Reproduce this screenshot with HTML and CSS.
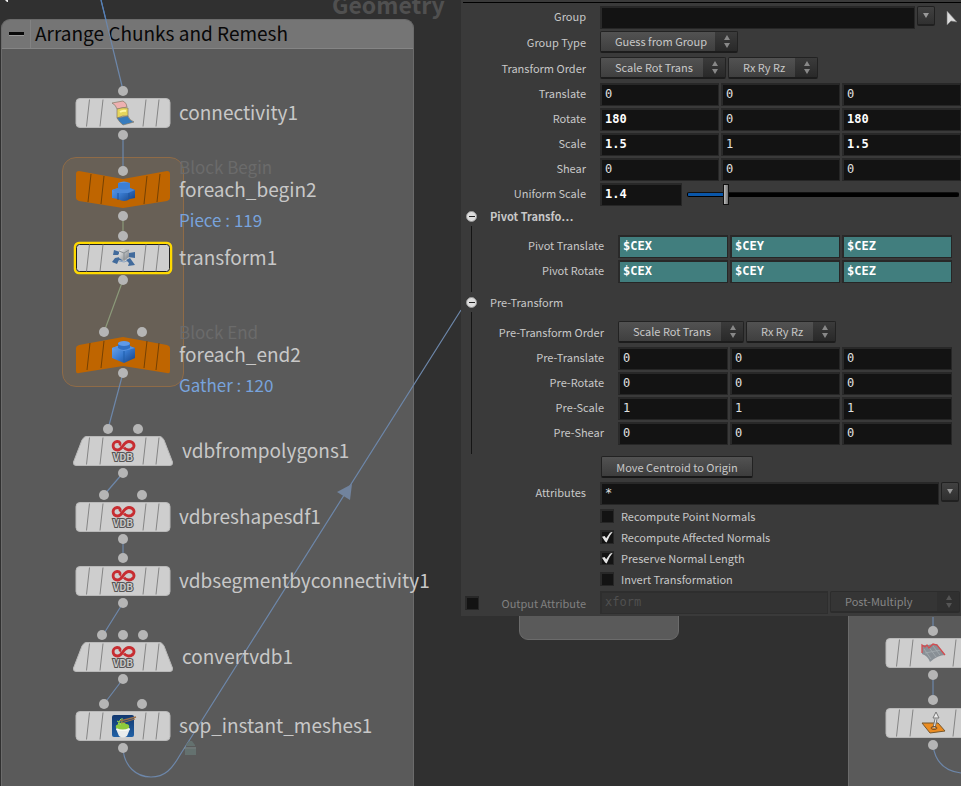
FILE: index.html
```html
<!DOCTYPE html>
<html lang="en">
<head>
<meta charset="utf-8">
<title>Network editor</title>
<link rel="stylesheet" href="styles.css">
</head>
<body>
<svg class="defs" aria-hidden="true">
  <defs>
    <linearGradient id="blue" x1="0" y1="0" x2="1" y2="1"><stop offset="0" stop-color="#71a9ef"/><stop offset=".5" stop-color="#397bd0"/><stop offset="1" stop-color="#123f83"/></linearGradient>
    <linearGradient id="sky" x1="0" y1="0" x2="0" y2="1"><stop offset="0" stop-color="#12386f"/><stop offset="1" stop-color="#2161a6"/></linearGradient>
    <linearGradient id="metal" x1="0" y1="0" x2="1" y2="1"><stop offset="0" stop-color="#f4f4f4"/><stop offset="1" stop-color="#777d82"/></linearGradient>
    <g id="ticks" fill="none" stroke="#858585"><path d="M-33.500-13.500L-36.500 13.500M-20-13.500L-23 13.500M23-13.500L20 13.500M36-13.500L33 13.500"/></g>
    <g id="plate"><rect x="-47" y="-14.500" width="94" height="29" rx="4" fill="#cecece" stroke="#b9b9b9"/><use href="#ticks"/></g>
    <g id="trapezoid"><path d="M-37-14.500H37Q39-14.500 41-11L49.500 11Q50 14.500 47 14.500H-47Q-50 14.500-49.500 11L-41-11Q-39-14.500-37-14.500Z" fill="#cecece" stroke="#b9b9b9"/><use href="#ticks"/></g>
    <g id="vdb">
      <path d="M9-1.500C13-5 10.500-9.500 6-9.500C0-9.500 0-1-5.500-1C-11-1-11.500-9-6-9.500C-3-9.700-2-7-3.500-5.500M1-3.500C3-.5 7.500 0 10-3" fill="none" stroke="#c72d31" stroke-width="2.800"/>
      <text x="0" y="10" class="vdb-text">VDB</text>
    </g>
    <g id="brick"><path d="M-11-4L0-8L12-4V6L1 11L-11 6Z" fill="url(#blue)"/><path d="M-11-4L1-1L12-4L1-8Z" fill="#5792df"/><path d="M1-1V10" stroke="#1f5eab"/><path d="M-5-9V-4Q0 0 7-4V-9Z" fill="#306fc3"/><ellipse cx="1" cy="-8.500" rx="6" ry="2.500" fill="#5f9ae8"/></g>
    <g id="brick-top"><path d="M-11-2L-5-4V-9Q1-12 7-9V-4L12-2V6L7 7Q1 11-5 7L-11 6Z" fill="url(#blue)"/><path d="M-11-2L-5-4L7-4L12-2L5 1L-5 1Z" fill="#4786d8"/><path d="M-5 1V8M6 1V7" stroke="#1b529c"/><path d="M-5-9V-4Q1-1 7-4V-9Z" fill="#3c7fd6"/></g>
  </defs>
</svg>

<main class="canvas">
  <div class="context">Geometry</div>
  <section class="netbox netbox--main">
    <header class="netbox__head"><button class="netbox__fold" aria-label="Collapse"></button><h2>Arrange Chunks and Remesh</h2></header>
  </section>
  <div class="netbox netbox--small"></div>
  <div class="netbox netbox--right"></div>
  <div class="loop"></div>

  <svg class="wires" width="961" height="786" aria-hidden="true">
    <path d="M5 0H8V2H7Z" fill="#eee"/>
    <g fill="none" stroke="#6d87aa" stroke-width="1.200">
      <path d="M101 0L123 90" /><path d="M123 135V171M123 373L108 429M123 473L104 495M123 539V558M123 603L103 635M123 679L104 704"/>
      <path d="M123 748C124 766 136 777 151 777C165 777 172 769 180 755L461 310M933 617V631M933 675V700M933 745Q936 770 961 773"/>
      <path d="M123 216V236M123 280L104 332" stroke="#8b9979"/>
    </g>
    <path d="M101 0L106 20" stroke="#4e7fbd"/>
    <path d="M352 484L337 492L350 500Z" fill="#71839d"/>
    <g fill="#64716f"><path d="M186 745l3-4h3l3 4v1h-9zM185 749h11v6h-11z"/><path d="M184 748h12" stroke="#829392"/></g>
    <g class="dots">
      <circle cx="123" cy="91" r="5"/><circle cx="123" cy="135" r="5"/><circle cx="123" cy="171" r="5"/><circle cx="123" cy="216" r="5"/><circle cx="123" cy="236" r="5"/><circle cx="123" cy="280" r="5"/><circle cx="104" cy="332" r="5"/><circle cx="142" cy="332" r="5"/><circle cx="123" cy="373" r="5"/>
      <circle cx="108" cy="429" r="5"/><circle cx="138" cy="429" r="5"/><circle cx="123" cy="473" r="5"/><circle cx="104" cy="495" r="5"/><circle cx="142" cy="495" r="5"/><circle cx="123" cy="539" r="5"/><circle cx="123" cy="558" r="5"/><circle cx="123" cy="603" r="5"/>
      <circle cx="102" cy="635" r="5"/><circle cx="123" cy="635" r="5"/><circle cx="143" cy="635" r="5"/><circle cx="123" cy="679" r="5"/><circle cx="104" cy="704" r="5"/><circle cx="142" cy="704" r="5"/><circle cx="123" cy="748" r="5"/>
      <circle cx="933" cy="631" r="5"/><circle cx="933" cy="675" r="5"/><circle cx="933" cy="700" r="5"/><circle cx="933" cy="745" r="5"/>
    </g>
  </svg>

  <div class="node node--connectivity">
    <svg viewBox="-50 -20 100 40"><use href="#plate"/>
      <g stroke="#857a66" stroke-width=".7"><path d="M-11-10L0-12Q4-10 4-6L-6-4Q-7-8-11-10Z" fill="#eeb0b0"/><path d="M-6-4Q0-6 5-5V3Q0 2-6 5Z" fill="#e5d55c"/><path d="M-6 5L5 3Q6 7 11 9L0 12Q-3 10-6 5Z" fill="#367bbd"/></g><path d="M-3-1Q0-3 3-2" stroke="#fff6a0" fill="none" stroke-width="2"/>
    </svg>
    <span class="node__name">connectivity1</span>
  </div>
  <div class="node node--begin">
    <svg viewBox="-50 -20 100 40"><path d="M-44-19L0-11L44-19Q47-19 47-16V8Q47 10 44 11L0 18L-44 11Q-47 10-47 8V-16Q-47-19-44-19Z" fill="#bf6500"/><path d="M-32-16L-35 12M-19-14L-22 14M24-14L21 14M37-16L34 12" stroke="#754103"/><g transform="translate(0 2)"><use href="#brick-top"/></g></svg>
    <div class="node__stack"><span class="node__kind">Block Begin</span><span class="node__name">foreach_begin2</span><span class="node__info">Piece : 119</span></div>
  </div>
  <div class="node node--transform">
    <svg viewBox="-50 -20 100 40"><rect x="-48" y="-15" width="96" height="30" rx="4" fill="#cecece" stroke="#ffd900" stroke-width="2.500"/><rect x="-46.500" y="-13.500" width="93" height="27" rx="3" fill="none" stroke="#222"/><use href="#ticks"/>
      <path d="M-9-8L-3-6L-5-3L-10-3ZM6-5L12-6V0L5-1ZM-8 0L-3-1L0 3L-4 2L-6 6L-11 4ZM3 2L7 0L12 7L5 8L6 5Z" fill="#426b9c"/><path d="M-4-7L1-10L6-8V-1L1 3L-4 0Z" fill="url(#metal)"/><path d="M-4-7L1-5L6-8M1-5V2" stroke="#888e91" fill="none"/><path d="M-4 3L1 4L4 3" stroke="#8da4bf" fill="none"/>
    </svg>
    <span class="node__name">transform1</span>
  </div>
  <div class="node node--end">
    <svg viewBox="-50 -20 100 40"><path d="M-44-10L0-18L44-10Q47-9 47-7V16Q47 19 44 18L0 11L-44 18Q-47 19-47 16V-7Q-47-9-44-10Z" fill="#bf6500"/><path d="M-33-12L-36 15M-19-14L-22 13M24-14L21 13M36-12L33 15" stroke="#754103"/><g transform="translate(0 -3)"><use href="#brick"/></g></svg>
    <div class="node__stack"><span class="node__kind">Block End</span><span class="node__name">foreach_end2</span><span class="node__info">Gather : 120</span></div>
  </div>
  <div class="node node--wide node--frompoly"><svg viewBox="-50 -20 100 40"><use href="#trapezoid"/><use href="#vdb"/></svg><span class="node__name">vdbfrompolygons1</span></div>
  <div class="node node--reshape"><svg viewBox="-50 -20 100 40"><use href="#plate"/><use href="#vdb"/></svg><span class="node__name">vdbreshapesdf1</span></div>
  <div class="node node--segment"><svg viewBox="-50 -20 100 40"><use href="#plate"/><use href="#vdb"/></svg><span class="node__name">vdbsegmentbyconnectivity1</span></div>
  <div class="node node--wide node--convert"><svg viewBox="-50 -20 100 40"><use href="#trapezoid"/><use href="#vdb"/></svg><span class="node__name">convertvdb1</span></div>
  <div class="node node--meshes">
    <svg viewBox="-50 -20 100 40"><use href="#plate"/><rect x="-11" y="-11" width="22" height="22" rx="2" fill="url(#sky)"/><path d="M-7 3H7L4 10Q0 13-4 10Z" fill="#e9ecec"/><ellipse cx="0" cy="3" rx="7" ry="2" fill="#f7faf6"/><path d="M-7 2Q-8-2-4-1Q-6-4-2-3Q1-5 3-2Q7-2 6 2Q0 5-7 2Z" fill="#8fcb3d"/><path d="M-5-1Q-3-7-2-7M-3-1Q0-5-1-8M-4-4L-6-5" stroke="#a2df4b" fill="none"/><path d="M-3-5L13-9M-2-3L12-7" stroke="#9b704a" stroke-width="1.300"/></svg>
    <span class="node__name">sop_instant_meshes1</span>
  </div>
  <div class="node node--terrain">
    <svg viewBox="-50 -20 100 40"><use href="#plate"/><path d="M-11-8L-5-8L0-9L4-9L12 2Q5 2-3 9Q-5 3-11 1Z" fill="#899096"/><path d="M-9-4L-2 6M-5-7L3 4M0-7L7 2M-8 0L8-3" stroke="#a5acb0" stroke-width=".8"/><path d="M-11 0V-8L-8-6L-6-8L-4-5L0-9L4-8L12 2" stroke="#d54b4f" fill="none" stroke-width="1.300"/></svg>
  </div>
  <div class="node node--normal">
    <svg viewBox="-50 -20 100 40"><use href="#plate"/><path d="M-11 0L5 0L12 8L-3 10Z" fill="#eb8c21" stroke="#76572d"/><path d="M1 5L3-4" stroke="#777" stroke-width="3"/><path d="M1 5L3-4" stroke="#eee"/><path d="M3-11L6-5L0-5Z" fill="#eee" stroke="#777"/><ellipse cx="1" cy="5" rx="3" ry="1.500" fill="none" stroke="#76502a"/></svg>
  </div>
</main>

<form class="panel">
  <div class="rows">
    <div class="row"><label for="group">Group</label><div class="line line--group"><input id="group" class="field" type="text"><button type="button" class="drop" aria-label="Group list"><i></i></button><button type="button" class="pick" aria-label="Select geometry"><svg width="14" height="16" viewBox="0 0 14 16"><path d="M2 1V15L6 11L12 12Z" fill="#ddd" stroke="#777" stroke-width=".6"/></svg></button></div></div>
    <div class="row row--menu"><label for="gtype">Group Type</label><div class="line"><span class="menu menu--l"><select id="gtype"><option>Guess from Group</option></select><i></i></span></div></div>
    <div class="row row--menu"><label for="order">Transform Order</label><div class="line"><span class="menu menu--m"><select id="order"><option>Scale Rot Trans</option></select><i></i></span><span class="menu menu--s"><select aria-label="Rotate order"><option>Rx Ry Rz</option></select><i></i></span></div></div>
    <div class="row"><label for="t">Translate</label><div class="triple"><input id="t" class="field" value="0"><input class="field" aria-label="Translate Y" value="0"><input class="field" aria-label="Translate Z" value="0"></div></div>
    <div class="row"><label for="r">Rotate</label><div class="triple"><input id="r" class="field field--set" value="180"><input class="field" aria-label="Rotate Y" value="0"><input class="field field--set" aria-label="Rotate Z" value="180"></div></div>
    <div class="row"><label for="s">Scale</label><div class="triple"><input id="s" class="field field--set" value="1.5"><input class="field" aria-label="Scale Y" value="1"><input class="field field--set" aria-label="Scale Z" value="1.5"></div></div>
    <div class="row"><label for="sh">Shear</label><div class="triple"><input id="sh" class="field" value="0"><input class="field" aria-label="Shear Y" value="0"><input class="field" aria-label="Shear Z" value="0"></div></div>
    <div class="row"><label for="u">Uniform Scale</label><div class="line line--slider"><input id="u" class="field field--set field--short" value="1.4"><input class="slider" type="range" aria-label="Uniform Scale slider" min="0" max="10.5" step="0.1" value="1.4"></div></div>
  </div>

  <button type="button" class="fold fold--set"><i></i>Pivot Transfo…</button>
  <div class="rows rows--sub">
    <div class="row"><label for="pt">Pivot Translate</label><div class="triple"><input id="pt" class="field field--expr" value="$CEX"><input class="field field--expr" aria-label="Pivot Translate Y" value="$CEY"><input class="field field--expr" aria-label="Pivot Translate Z" value="$CEZ"></div></div>
    <div class="row"><label for="pr">Pivot Rotate</label><div class="triple"><input id="pr" class="field field--expr" value="$CEX"><input class="field field--expr" aria-label="Pivot Rotate Y" value="$CEY"><input class="field field--expr" aria-label="Pivot Rotate Z" value="$CEZ"></div></div>
  </div>

  <button type="button" class="fold"><i></i>Pre-Transform</button>
  <div class="rows rows--sub">
    <div class="row row--menu"><label for="po">Pre-Transform Order</label><div class="line"><span class="menu menu--m"><select id="po"><option>Scale Rot Trans</option></select><i></i></span><span class="menu menu--s"><select aria-label="Pre-rotate order"><option>Rx Ry Rz</option></select><i></i></span></div></div>
    <div class="row"><label for="p1">Pre-Translate</label><div class="triple"><input id="p1" class="field" value="0"><input class="field" aria-label="Pre-Translate Y" value="0"><input class="field" aria-label="Pre-Translate Z" value="0"></div></div>
    <div class="row"><label for="p2">Pre-Rotate</label><div class="triple"><input id="p2" class="field" value="0"><input class="field" aria-label="Pre-Rotate Y" value="0"><input class="field" aria-label="Pre-Rotate Z" value="0"></div></div>
    <div class="row"><label for="p3">Pre-Scale</label><div class="triple"><input id="p3" class="field" value="1"><input class="field" aria-label="Pre-Scale Y" value="1"><input class="field" aria-label="Pre-Scale Z" value="1"></div></div>
    <div class="row"><label for="p4">Pre-Shear</label><div class="triple"><input id="p4" class="field" value="0"><input class="field" aria-label="Pre-Shear Y" value="0"><input class="field" aria-label="Pre-Shear Z" value="0"></div></div>
  </div>

  <div class="rows rows--end">
    <div class="row row--menu"><span></span><div class="line"><button type="button" class="action">Move Centroid to Origin</button></div></div>
    <div class="row"><label for="attr">Attributes</label><div class="line line--attr"><input id="attr" class="field" value="*"><button type="button" class="drop" aria-label="Attribute list"><i></i></button></div></div>
    <div class="checks">
      <label><input type="checkbox">Recompute Point Normals</label>
      <label><input type="checkbox" checked>Recompute Affected Normals</label>
      <label><input type="checkbox" checked>Preserve Normal Length</label>
      <label><input type="checkbox">Invert Transformation</label>
    </div>
    <div class="row row--off"><div class="toggle"><input type="checkbox" aria-label="Enable output attribute"><label for="out">Output Attribute</label></div><div class="line line--off"><input id="out" class="field" value="xform" disabled><span class="menu menu--post"><select aria-label="Output mode" disabled><option>Post-Multiply</option></select><i></i></span></div></div>
  </div>
</form>
</body>
</html>
```
FILE: styles.css
```css
* { box-sizing: border-box; }

body {
  margin: 0;
  min-height: 100vh;
  background: #303030;
  color: #c8c8c8;
  font: 11px/20px "Noto Sans CJK SC", "Noto Sans", sans-serif;
  overflow: hidden;
}

input, select, button { font: inherit; color: inherit; margin: 0; }
button { padding: 0; border: 0; background: none; }
.defs { position: absolute; width: 0; height: 0; }

/* Network canvas */
.canvas { position: absolute; inset: 0; overflow: hidden; }
.wires { position: absolute; left: 0; top: 0; }
.dots { fill: #b5b5b5; }

.context {
  position: absolute;
  left: 332px;
  top: -12px;
  color: #505050;
  font-size: 23px;
  line-height: 32px;
  font-weight: 700;
}

.netbox { position: absolute; background: #5a5a5a; border: 1px solid #6b6b6b; }
.netbox--main { left: 1px; top: 19px; bottom: 0; width: 413px; border-radius: 9px 9px 0 0; border-bottom: 0; overflow: hidden; }
.netbox--small { left: 519px; top: 560px; width: 160px; height: 80px; border-radius: 9px; }
.netbox--right { left: 848px; top: 560px; right: -20px; bottom: -20px; }
.netbox__head { display: flex; height: 29px; background: #757575; border-bottom: 1px solid #858585; }
.netbox__head h2 { margin: 0; padding-left: 4px; color: #080808; font-size: 19px; line-height: 26px; font-weight: 400; }
.netbox__fold { width: 29px; display: grid; place-items: center; border-right: 1px solid #828282; }
.netbox__fold::before { content: ""; width: 15px; height: 3px; background: #080808; border-bottom: 1px solid #999; }

.loop {
  position: absolute;
  left: 62px;
  top: 157px;
  width: 122px;
  height: 230px;
  border: 1px solid #8f6b47;
  border-radius: 14px;
  background: #686056;
}

.node { position: absolute; left: 73px; display: flex; gap: 6px; white-space: nowrap; }
.node svg { width: 100px; height: 40px; flex: none; overflow: visible; }
.node__name { color: #c8c8c8; font-size: 19px; line-height: 38px; }
.node__stack { display: flex; flex-direction: column; margin-top: -14px; }
.node__stack .node__name { line-height: 22px; }
.node__kind { color: #6b6b6b; font-size: 17px; line-height: 22px; }
.node__info { color: #78a3dc; font-size: 17px; line-height: 40px; }
.node--wide { gap: 9px; }
.node--connectivity { top: 93px; }
.node--begin { top: 170px; }
.node--transform { top: 238px; }
.node--end { top: 335px; }
.node--frompoly { top: 431px; }
.node--reshape { top: 497px; }
.node--segment { top: 561px; }
.node--convert { top: 637px; }
.node--meshes { top: 706px; }
.node--terrain { left: 883px; top: 633px; }
.node--normal { left: 883px; top: 703px; }
.vdb-text { font: 700 10px "Noto Sans CJK SC", sans-serif; fill: #c9c9c9; stroke: #555; stroke-width: 2px; paint-order: stroke; text-anchor: middle; }

/* Parameter panel */
.panel { position: relative; margin-left: 461px; padding-bottom: 2px; background: #3a3a3a; }
.panel::before { content: ""; display: block; height: 2px; margin-left: 2px; border-bottom: 1px solid #000; }
.rows { display: flex; flex-direction: column; gap: 2px; padding-top: 3px; }
.rows--sub { margin-left: 10px; padding: 9px 9px 9px 0; border-left: 1px solid #151515; }
.rows--end { padding-top: 2px; }

.row { display: grid; grid-template-columns: 125px minmax(0, 1fr); column-gap: 14px; height: 23px; }
.rows--sub .row { grid-template-columns: 132px minmax(0, 1fr); }
.row--menu { height: 24px; }
.row > label, .toggle label { text-align: right; line-height: 20px; white-space: nowrap; }
.row--menu > label { line-height: 22px; }
.line { display: flex; gap: 2px; align-items: flex-start; }
.triple { display: grid; grid-template-columns: repeat(3, minmax(0, 1fr)); gap: 2px; }

.field {
  min-width: 0;
  width: 100%;
  height: 23px;
  padding: 0 3px 2px;
  border: 1px solid #262626;
  border-top: 2px solid #282828;
  border-left: 2px solid #2a2a2a;
  border-radius: 0;
  background: #131313;
  color: #e0e0e0;
  font: 12px/18px "DejaVu Sans Mono", monospace;
}
.field--set { color: #fff; font-weight: 700; }
.field--expr { background: #417e7e; color: #fff; font-weight: 700; }
.field--short { flex: none; width: 82px; }

.menu { position: relative; flex: none; height: 22px; }
.menu--l { width: 138px; }
.menu--m { width: 126px; }
.menu--s { width: 90px; }
.menu select {
  appearance: none;
  width: 100%;
  height: 22px;
  padding: 0 24px 1px 14px;
  border: 1px solid #222;
  border-bottom: 2px solid #1c1c1c;
  border-radius: 2px;
  background: linear-gradient(#525252, #3f3f3f);
  line-height: 18px;
}
.menu i { position: absolute; right: 1px; top: 1px; bottom: 2px; width: 22px; background: linear-gradient(#3b3b3b, #292929); pointer-events: none; }
.menu i::before, .menu i::after { content: ""; position: absolute; left: 9px; border: 3px solid transparent; }
.menu i::before { top: 0; border-bottom: 5px solid #888; }
.menu i::after { bottom: 0; border-top: 5px solid #888; }

.drop { flex: none; width: 18px; height: 20px; border: 1px solid #202020; border-bottom-width: 2px; border-radius: 2px; background: linear-gradient(#414141, #303030); }
.drop i { display: block; width: 6px; margin: 0 auto; border: 3px solid transparent; border-top: 5px solid #999; border-bottom: 0; }
.pick { flex: none; width: 14px; height: 23px; margin-left: 8px; display: grid; place-items: center; }
.pick svg { display: block; }
.line--group { padding-right: 2px; }
.line--attr { padding-right: 2px; }

.line--slider { gap: 5px; padding-right: 2px; }
.slider { appearance: none; flex: 1; min-width: 0; height: 23px; background: none; }
.slider::-webkit-slider-runnable-track { height: 5px; border: 1px solid #000; border-top-color: #111; border-radius: 2px; background: linear-gradient(90deg, #0a56a8 14%, #000 14%); }
.slider::-webkit-slider-thumb { appearance: none; width: 6px; height: 21px; margin-top: -9px; border: 1px solid #111; background: linear-gradient(90deg, #bbb, #707070); }

.fold { display: flex; align-items: center; gap: 13px; height: 20px; padding-left: 5px; line-height: 20px; }
.fold--set { font-weight: 700; }
.fold i { display: grid; place-items: center; width: 11px; height: 11px; border: 1px solid #999; border-radius: 50%; background: #ddd; }
.fold i::before { content: ""; width: 6px; height: 1px; background: #222; }

.action { width: 152px; height: 22px; margin-left: 1px; border: 1px solid #222; border-bottom: 2px solid #181818; border-radius: 2px; background: linear-gradient(#525252, #3d3d3d); line-height: 16px; }

input[type="checkbox"] { appearance: none; flex: none; width: 14px; height: 14px; border: 1px solid #262626; border-top: 2px solid #282828; border-left: 2px solid #2a2a2a; background: #131313; }
input[type="checkbox"]:checked::before { content: ""; display: block; width: 11px; height: 11px; background: #e4e4e4; clip-path: polygon(0 48%, 24% 42%, 38% 62%, 72% 12%, 100% 0, 70% 42%, 42% 100%, 28% 92%); }
.checks { margin-top: -2px; padding-left: 139px; }
.checks label { display: flex; align-items: center; gap: 7px; height: 21px; line-height: 18px; }

.toggle { display: flex; align-items: center; justify-content: space-between; padding-left: 4px; }
.row--off { color: #808080; }
.line--off { padding-right: 1px; }
.line--off .field { background: #333; border-color: #2e2e2e; color: #505050; }
.menu--post { width: 130px; }
.line--off select { background: #353535; border-color: #2c2c2c; color: #858585; opacity: 1; }
.line--off .menu i { background: #303030; }
.line--off .menu i::before { border-bottom-color: #555; }
.line--off .menu i::after { border-top-color: #555; }
```
